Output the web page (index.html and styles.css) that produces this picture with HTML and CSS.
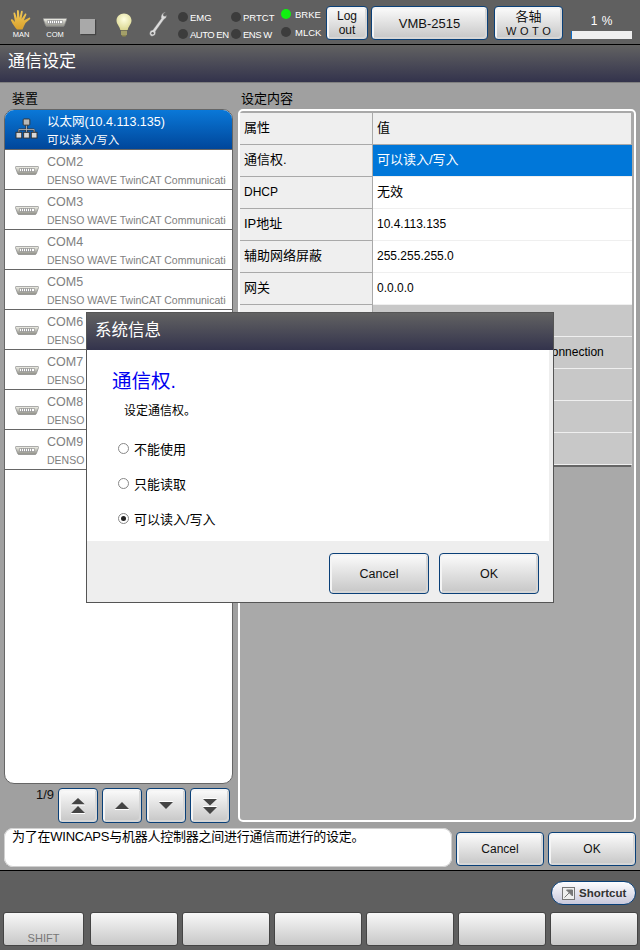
FILE: index.html
```html
<!DOCTYPE html>
<html lang="zh-CN">
<head>
<meta charset="utf-8">
<title>通信设定</title>
<link rel="stylesheet" href="styles.css">
</head>
<body>
<svg class="defs" width="0" height="0" aria-hidden="true">
  <defs>
    <linearGradient id="port" x1="0" y1="0" x2="0" y2="1"><stop offset="0" stop-color="#f2f2ea"/><stop offset="1" stop-color="#8c8c84"/></linearGradient>
    <radialGradient id="glass" cx=".5" cy=".35" r=".7"><stop offset="0" stop-color="#ffffe0"/><stop offset="1" stop-color="#d8d48c"/></radialGradient>
    <linearGradient id="palm" x1="0" y1="0" x2="0" y2="1"><stop offset="0" stop-color="#f4cc58"/><stop offset="1" stop-color="#d8a02c"/></linearGradient>
    <symbol id="serial" viewBox="0 0 24 12">
      <path d="M1 2.500h22c.6 0 .8.5.6 1l-2.200 6c-.2.600-.6 1-1.200 1H3.800c-.6 0-1-.4-1.200-1L.4 3.500c-.2-.5 0-1 .6-1z" fill="url(#port)" stroke="#8a8a8a" stroke-width=".7"/>
      <path d="M4.500 4.500h15v3h-15z" fill="#fff" stroke="#888" stroke-width=".6"/>
      <path d="M6.500 4.500v3M8.500 4.500v3M10.500 4.500v3M12.500 4.500v3M14.500 4.500v3M16.500 4.500v3" stroke="#888" stroke-width=".8"/>
    </symbol>
  </defs>
</svg>
<div class="screen">
  <header class="topbar">
    <div class="mode mode-hand">
      <svg class="hand" viewBox="0 0 22 21"><path d="M7 20.500c-2-2-3-4-4.500-6L1 11.500c-.5-1 .8-1.800 1.600-1L5 13 3.500 4.500c-.2-1.200 1.400-1.500 1.700-.3L7 9.500 7 2c0-1.300 1.700-1.300 1.800 0l.7 7L11 2.500c.3-1.200 1.900-.8 1.700.4L11.500 10l3.300-5c.7-1 2-.2 1.500.8L13.800 11.500l5.200-2.800c1-.5 1.800.8.900 1.500L15.500 14c-1 2-2 4-3 6.500z" fill="url(#palm)"/></svg>
      <span class="mode-label">MAN</span>
    </div>
    <div class="mode mode-com">
      <svg class="com" viewBox="0 0 24 12"><use href="#serial"/></svg>
      <span class="mode-label">COM</span>
    </div>
    <span class="stop"></span>
    <svg class="bulb" viewBox="0 0 16 24"><path d="M8 .5c4.200 0 7.500 3 7.500 7 0 3.500-3 5.500-3.800 9.500H4.300C3.500 13 .5 11 .5 7.500c0-4 3.300-7 7.500-7z" fill="url(#glass)"/><path d="M5 17.500h6v4l-1.500 2h-3L5 21.500z" fill="#8f8a50"/><path d="M5 19h6M5 21h6" stroke="#c9c59a" stroke-width=".7"/></svg>
    <svg class="wrench" viewBox="0 0 18 26"><path d="M16.500 1l-2.300 1.900.3 2 1.900.4 1-1.200c.3 2-.5 3.600-2.500 4.300L6.500 20.300c.5 2-.2 4.300-2.400 4.800C1.800 25.600 0 23.500.9 21.200c.5-1.300 1.500-2 2.900-2.100L12.300 7.500c-.7-3 1-5.800 4.200-6.500z" fill="#dcdcdc" stroke="#6a6a6a" stroke-width=".4"/><circle cx="3.600" cy="22.300" r="1.200" fill="#606060"/></svg>
    <div class="leds">
      <div class="led-row"><span class="led"></span><span class="led-text led-emg">EMG</span><span class="led"></span><span class="led-text">PRTCT</span></div>
      <div class="led-row"><span class="led"></span><span class="led-text led-emg led-tight">AUTO EN</span><span class="led"></span><span class="led-text led-tight">ENS W</span></div>
    </div>
    <div class="leds leds-right">
      <div class="led-row"><span class="led led-on"></span><span class="led-text led-wide">BRKE</span></div>
      <div class="led-row"><span class="led"></span><span class="led-text led-wide">MLCK</span></div>
    </div>
    <button class="btn btn-logout">Log<br>out</button>
    <button class="btn btn-robot">VMB-2515</button>
    <button class="btn btn-axis">各轴<br><span class="wide-text">W O T O</span></button>
    <div class="speed">
      <span class="speed-text">1 %</span>
      <span class="speed-bar"><span class="speed-fill"></span></span>
    </div>
  </header>

  <div class="titlebar">通信设定</div>

  <main class="main">
    <div class="workspace">
      <section class="left">
        <div class="label label-left">装置</div>
        <div class="device-list">
          <div class="device device-active">
            <svg class="net-icon" viewBox="0 0 24 22"><path d="M12 7v5M4 12h16M4 12v3M12 12v3M20 12v3" stroke="#333" stroke-width="2.200" fill="none"/><path d="M12 7v5M4 12h16M4 12v3M12 12v3M20 12v3" stroke="#c8c8c8" stroke-width=".8" fill="none"/><rect x="8.500" y="1" width="7" height="6.500" rx="1" fill="#b8b8b8" stroke="#333"/><rect x="1" y="15" width="6" height="6" fill="#d8d8d8" stroke="#333"/><rect x="9" y="15" width="6" height="6" fill="#d8d8d8" stroke="#333"/><rect x="17" y="15" width="6" height="6" fill="#d8d8d8" stroke="#333"/></svg>
            <div class="device-text"><div class="device-name">以太网(10.4.113.135)</div><div class="device-sub device-sub-cjk">可以读入/写入</div></div>
          </div>
          <div class="device"><svg class="port-icon"><use href="#serial"/></svg><div class="device-text"><div class="device-name">COM2</div><div class="device-sub">DENSO WAVE TwinCAT Communication</div></div></div>
          <div class="device"><svg class="port-icon"><use href="#serial"/></svg><div class="device-text"><div class="device-name">COM3</div><div class="device-sub">DENSO WAVE TwinCAT Communication</div></div></div>
          <div class="device"><svg class="port-icon"><use href="#serial"/></svg><div class="device-text"><div class="device-name">COM4</div><div class="device-sub">DENSO WAVE TwinCAT Communication</div></div></div>
          <div class="device"><svg class="port-icon"><use href="#serial"/></svg><div class="device-text"><div class="device-name">COM5</div><div class="device-sub">DENSO WAVE TwinCAT Communication</div></div></div>
          <div class="device"><svg class="port-icon"><use href="#serial"/></svg><div class="device-text"><div class="device-name">COM6</div><div class="device-sub">DENSO WAVE TwinCAT Communication</div></div></div>
          <div class="device"><svg class="port-icon"><use href="#serial"/></svg><div class="device-text"><div class="device-name">COM7</div><div class="device-sub">DENSO WAVE TwinCAT Communication</div></div></div>
          <div class="device"><svg class="port-icon"><use href="#serial"/></svg><div class="device-text"><div class="device-name">COM8</div><div class="device-sub">DENSO WAVE TwinCAT Communication</div></div></div>
          <div class="device"><svg class="port-icon"><use href="#serial"/></svg><div class="device-text"><div class="device-name">COM9</div><div class="device-sub">DENSO WAVE TwinCAT Communication</div></div></div>
        </div>
        <div class="pager">
          <span class="page-num">1/9</span>
          <button class="btn btn-page"><svg class="arrow" viewBox="0 0 16 16"><path d="M8 0l7 6.500H1zM8 8l7 7H1z" fill="#444"/><path d="M1 7h14M1 15.500h14" stroke="#fff"/></svg></button>
          <button class="btn btn-page"><svg class="arrow" viewBox="0 0 16 16"><path d="M8 4l7 7H1z" fill="#444"/><path d="M1 11.500h14" stroke="#fff"/></svg></button>
          <button class="btn btn-page"><svg class="arrow" viewBox="0 0 16 16"><path d="M1 4h14l-7 7z" fill="#444"/><path d="M1 3.500h14" stroke="#fff"/></svg></button>
          <button class="btn btn-page"><svg class="arrow" viewBox="0 0 16 16"><path d="M1 1h14L8 7.500zM1 9h14l-7 7z" fill="#444"/><path d="M1 .5h14M1 8.500h14" stroke="#fff"/></svg></button>
        </div>
      </section>
      <section class="right">
        <div class="label label-right">设定内容</div>
        <div class="settings">
          <div class="table">
            <div class="cell key head">属性</div><div class="cell val head">值</div>
            <div class="cell key">通信权.</div><div class="cell val val-active">可以读入/写入</div>
            <div class="cell key cell-latin">DHCP</div><div class="cell val">无效</div>
            <div class="cell key">IP地址</div><div class="cell val cell-latin">10.4.113.135</div>
            <div class="cell key">辅助网络屏蔽</div><div class="cell val cell-latin">255.255.255.0</div>
            <div class="cell key">网关</div><div class="cell val cell-latin">0.0.0.0</div>
            <div class="cell key"></div><div class="cell val val-off"></div>
            <div class="cell key"></div><div class="cell val val-off cell-latin">DENSO WAVE TwinCAT Local Connection</div>
            <div class="cell key"></div><div class="cell val val-off"></div>
            <div class="cell key"></div><div class="cell val val-off"></div>
            <div class="cell key"></div><div class="cell val val-off"></div>
          </div>
        </div>
      </section>
    </div>
    <div class="footer-row">
      <div class="message">为了在WINCAPS与机器人控制器之间进行通信而进行的设定。</div>
      <button class="btn btn-form">Cancel</button>
      <button class="btn btn-form">OK</button>
    </div>
  </main>

  <footer class="bottombar">
    <div class="shortcut-row">
      <button class="shortcut"><svg class="shortcut-icon" viewBox="0 0 13 13"><rect x=".5" y=".5" width="12" height="12" fill="#eee" stroke="#777"/><path d="M2.500 10.500l6-6M4.500 3h6v6z" stroke="#777" fill="#777"/></svg>Shortcut</button>
    </div>
    <div class="keys">
      <button class="key-btn key-first">SHIFT</button>
      <button class="key-btn"></button>
      <button class="key-btn"></button>
      <button class="key-btn"></button>
      <button class="key-btn"></button>
      <button class="key-btn"></button>
      <button class="key-btn"></button>
    </div>
  </footer>

  <div class="dialog">
    <div class="dialog-title">系统信息</div>
    <div class="dialog-body">
      <div class="dialog-heading">通信权.</div>
      <div class="dialog-sub">设定通信权。</div>
      <div class="radio"><span class="radio-dot"></span>不能使用</div>
      <div class="radio"><span class="radio-dot"></span>只能读取</div>
      <div class="radio"><span class="radio-dot radio-on"></span>可以读入/写入</div>
    </div>
    <div class="dialog-footer">
      <button class="btn btn-dialog">Cancel</button>
      <button class="btn btn-dialog">OK</button>
    </div>
  </div>
</div>
</body>
</html>
```
FILE: styles.css
```css
* { box-sizing: border-box; }
html, body { margin: 0; padding: 0; }
body { font-family: "Liberation Sans", "Noto Sans CJK SC", sans-serif; background: #606060; color: #000; }
.defs { display: block; height: 0; }
.screen { position: relative; width: 640px; height: 950px; overflow: hidden; display: flex; flex-direction: column; background: #606060; }

.btn {
  font-family: inherit; font-size: 12px; color: #111; padding: 0; margin: 0;
  border: 1px solid #0a4078; border-radius: 4px;
  background: linear-gradient(#fcfcfc, #c6c6c6);
  box-shadow: inset 2px 2px 0 #f4f4f4, inset -2px -2px 0 #d6d6d6;
}

/* top bar */
.topbar { height: 45px; border-bottom: 1px solid #000; background: #606060; display: flex; align-items: flex-start; flex: none; }
.mode { display: flex; flex-direction: column; align-items: center; flex: none; }
.mode-label { font-size: 7.500px; color: #fff; line-height: 8px; }
.mode-hand { width: 22px; margin: 9px 0 0 10px; }
.hand { width: 22px; height: 21px; margin-bottom: 1px; }
.mode-com { width: 24px; margin: 16px 0 0 11px; }
.com { width: 24px; height: 12px; margin-bottom: 3px; }
.stop { width: 15px; height: 15px; margin: 19px 0 0 13px; background: #a9a9a9; box-shadow: 1px 1px 1px #444; flex: none; }
.bulb { width: 16px; height: 24px; margin: 13px 0 0 21px; flex: none; }
.wrench { width: 18px; height: 26px; margin: 11px 0 0 17px; flex: none; }
.leds { margin: 9px 0 0 11px; width: 103px; display: flex; flex-direction: column; gap: 1px; flex: none; }
.leds-right { margin: 6px 0 0 0; width: 45px; gap: 2px; }
.led-row { height: 16px; display: flex; align-items: center; }
.led { width: 10px; height: 10px; border-radius: 50%; background: #3c3c3c; flex: none; }
.led-on { background: #10f010; }
.led-text { font-size: 9.500px; color: #fff; margin-left: 2px; white-space: nowrap; }
.led-emg { width: 41px; }
.led-tight { letter-spacing: -.5px; }
.led-wide { margin-left: 4px; }
.btn-logout { width: 42px; height: 34px; margin: 6px 0 0 0; line-height: 14px; font-size: 12px; flex: none; }
.btn-robot { width: 117px; height: 34px; margin: 6px 0 0 3px; font-size: 13px; flex: none; }
.btn-axis { width: 69px; height: 34px; margin: 6px 0 0 6px; padding-top: 2px; line-height: 14px; font-size: 13px; flex: none; }
.wide-text { font-size: 11px; letter-spacing: .3px; }
.speed { width: 61px; margin: 12px 0 0 8px; display: flex; flex-direction: column; align-items: center; flex: none; }
.speed-text { font-size: 12px; color: #fff; line-height: 19px; word-spacing: 1px; }
.speed-bar { width: 61px; height: 8px; background: #eee; display: block; }
.speed-fill { width: 1px; height: 8px; background: #0a6cc8; display: block; }

.titlebar { height: 37px; flex: none; background: linear-gradient(#626262, #33334c); color: #fff; font-size: 17px; padding: 5px 0 0 8px; line-height: 24px; }

/* main */
.main { height: 789px; flex: none; background: #a0a0a0; border-bottom: 1px solid #000; border-top: 1px solid #808080; display: flex; flex-direction: column; }
.workspace { height: 745px; display: flex; flex: none; }
.label { font-size: 13px; line-height: 16px; height: 26px; padding-top: 8px; }
.label-left { padding-left: 8px; }
.label-right { padding-left: 3px; }
.left { width: 234px; margin-left: 4px; flex: none; }
.right { width: 398px; flex: none; }
.device-list { width: 229px; height: 675px; background: #fff; border: 1px solid #666; border-radius: 10px; overflow: hidden; }
.device { height: 40px; display: flex; align-items: flex-start; border-bottom: 1px solid #666; background: #fff; color: #808080; }
.device-active { height: 40px; background: linear-gradient(#0a78d8, #00469a); color: #fff; }
.port-icon { width: 24px; height: 12px; margin: 14px 0 0 10px; flex: none; }
.net-icon { width: 23px; height: 21px; margin: 8px 1px 0 10px; flex: none; }
.device-text { margin-left: 8px; width: 179px; overflow: hidden; white-space: nowrap; }
.device-name { font-size: 12.500px; line-height: 16px; margin-top: 4px; }
.device-sub { font-size: 10.500px; line-height: 14px; margin-top: 3px; }
.device-sub-cjk { font-size: 11.500px; }
.pager { height: 35px; margin-top: 4px; display: flex; gap: 4px; }
.page-num { width: 50px; font-size: 13px; color: #111; text-align: right; line-height: 14px; }
.btn-page { width: 40px; height: 35px; display: flex; align-items: center; justify-content: center; }
.arrow { width: 16px; height: 16px; }

.settings { height: 713px; border: 2px solid #fff; border-radius: 5px; background: #a9a9a9; padding: 2px 3px 0 0; }
.table { display: grid; grid-template-columns: 133px 259px; grid-auto-rows: 32px; border-bottom: 2px solid #666; }
.cell { font-size: 13px; padding-left: 4px; line-height: 29px; white-space: nowrap; overflow: hidden; }
.cell-latin { font-size: 12px; line-height: 31px; }
.key { background: #efefef; border-bottom: 1px solid #a9a9a9; border-right: 1px solid #a9a9a9; }
.val { background: #fff; border-bottom: 1px solid #efefef; }
.head { background: #efefef; border-bottom: 1px solid #a9a9a9; }
.val.head { border-right: 1px solid #a9a9a9; }
.val-active { background: #0077d9; color: #fff; }
.val-off { background: #c8c8c8; }

.footer-row { display: flex; align-items: flex-start; height: 42px; padding-left: 4px; }
.message { width: 448px; height: 39px; background: #fff; border-radius: 9px; font-size: 13px; letter-spacing: -.25px; padding: 1px 0 0 8px; line-height: 16px; box-shadow: 0 0 0 1px #d0d0d0 inset; }
.btn-form { width: 88px; height: 34px; margin: 4px 0 0 4px; font-size: 12px; }

/* bottom */
.bottombar { flex: 1; background: #5f5f5f; display: flex; flex-direction: column; padding-top: 10px; }
.shortcut-row { display: flex; justify-content: flex-end; padding-right: 4px; height: 31px; }
.shortcut { width: 85px; height: 24px; font-family: inherit; font-size: 11.500px; font-weight: bold; color: #333; padding: 0 0 0 10px; display: flex; align-items: center; gap: 4px; border: 1px solid #0a4078; border-radius: 12px; background: linear-gradient(#fdfdff, #c9c9dc); }
.shortcut-icon { width: 13px; height: 13px; flex: none; }
.keys { display: flex; gap: 4px; padding-left: 3px; }
.key-btn { width: 88px; height: 34px; padding: 0; font-family: inherit; border: 1px solid #444; border-radius: 3px; background: linear-gradient(#f8f8f8, #c8c8c8); font-size: 11px; color: #777; }
.key-first { width: 81px; margin-right: 2px; padding-top: 17px; }

/* dialog */
.dialog { position: absolute; left: 86px; top: 312px; width: 468px; height: 291px; border: 1px solid #555; background: #eee; display: flex; flex-direction: column; }
.dialog-title { height: 37px; flex: none; background: linear-gradient(#626262, #33334c); color: #fff; font-size: 16.500px; padding-left: 8px; line-height: 34px; }
.dialog-body { height: 191px; flex: none; margin-right: 4px; background: #fff; padding: 19px 0 0 25px; }
.dialog-heading { font-size: 19.500px; line-height: 24px; color: #0000f0; }
.dialog-sub { font-size: 12px; line-height: 16px; margin: 10px 0 12px 12px; }
.radio { height: 35px; display: flex; align-items: center; font-size: 13px; padding-left: 6px; gap: 5px; }
.radio-dot { width: 11px; height: 11px; border-radius: 50%; border: 1px solid #888; background: #fff; display: flex; align-items: center; justify-content: center; flex: none; }
.radio-on::after { content: ""; width: 5px; height: 5px; border-radius: 50%; background: #222; }
.dialog-footer { flex: 1; display: flex; justify-content: flex-end; gap: 10px; padding: 12px 14px 0 0; }
.btn-dialog { width: 100px; height: 41px; font-size: 12.500px; }
```
